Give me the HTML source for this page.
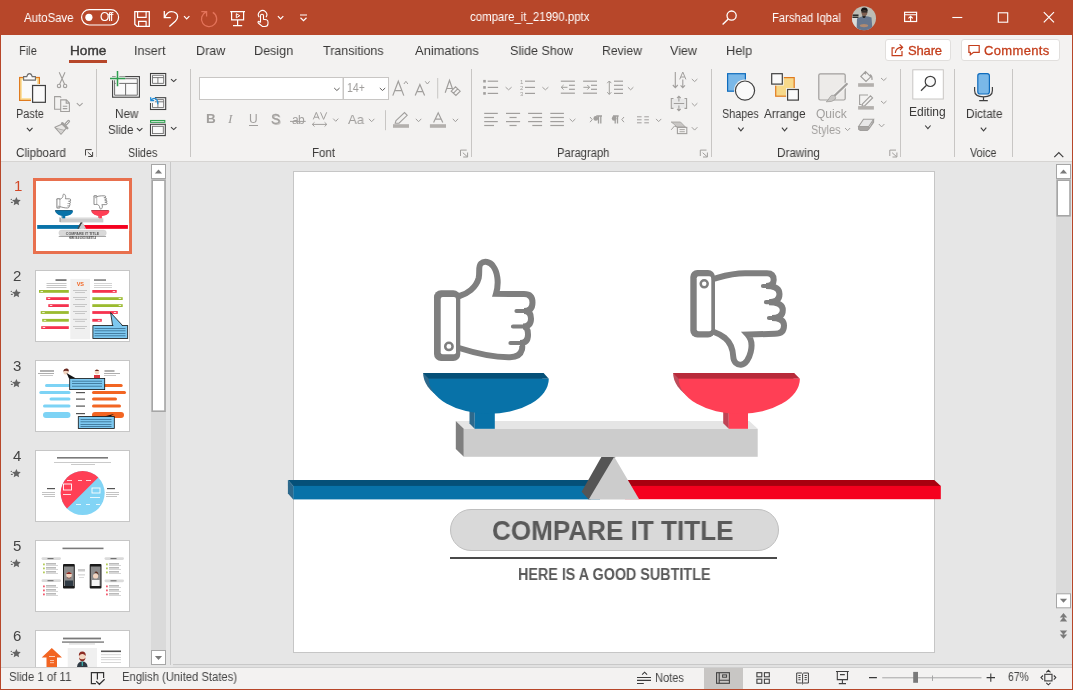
<!DOCTYPE html>
<html><head><meta charset="utf-8"><style>
html,body{margin:0;padding:0;}
body{width:1073px;height:690px;overflow:hidden;position:relative;background:#F3F2F1;font-family:"Liberation Sans",sans-serif;}
.t{position:absolute;white-space:nowrap;will-change:transform;}
svg{overflow:visible}
</style></head><body>
<div style="position:absolute;left:0px;top:0px;width:1073px;height:35px;background:#B7472A"></div>
<div style="position:absolute;left:1px;top:35px;width:1071px;height:126px;background:#F3F2F1"></div>
<div style="position:absolute;left:1px;top:161px;width:1071px;height:1px;background:#D6D4D2"></div>
<div style="position:absolute;left:1px;top:162px;width:1071px;height:505px;background:#E6E6E6"></div>
<div style="position:absolute;left:173px;top:664px;width:899px;height:1px;background:#C8C8C8"></div>
<div style="position:absolute;left:173px;top:665px;width:899px;height:2px;background:#E1E1E1"></div>
<div style="position:absolute;left:1px;top:667px;width:1071px;height:1px;background:#CFCFCF"></div>
<div style="position:absolute;left:1px;top:668px;width:1071px;height:21px;background:#F3F2F1"></div>
<div style="position:absolute;left:0px;top:35px;width:1px;height:655px;background:#B7472A"></div>
<div style="position:absolute;left:1072px;top:35px;width:1px;height:655px;background:#B7472A"></div>
<div style="position:absolute;left:0px;top:689px;width:1073px;height:1px;background:#B7472A"></div>
<span class="t" style="left:24.10px;top:11.54px;font-size:12px;line-height:12px;color:#FFFFFF;letter-spacing:0.000px;transform:scaleX(0.9532);transform-origin:0 0;">AutoSave</span>
<span class="t" style="left:99.60px;top:11.44px;font-size:12px;line-height:12px;color:#FFFFFF;letter-spacing:-1.242px;">Off</span>
<span class="t" style="left:469.80px;top:11.34px;font-size:12px;line-height:12px;color:#FFFFFF;letter-spacing:0.000px;transform:scaleX(0.9521);transform-origin:0 0;">compare_it_21990.pptx</span>
<span class="t" style="left:771.70px;top:12.34px;font-size:12px;line-height:12px;color:#FFFFFF;letter-spacing:0.000px;transform:scaleX(0.9377);transform-origin:0 0;">Farshad Iqbal</span>
<span class="t" style="left:18.50px;top:44.00px;font-size:13px;line-height:13px;color:#3B3A39;letter-spacing:0.000px;transform:scaleX(0.8546);transform-origin:0 0;">File</span>
<span class="t" style="left:69.50px;top:44.00px;font-size:13px;line-height:13px;color:#3B3A39;letter-spacing:0.000px;transform:scaleX(1.0497);transform-origin:0 0;-webkit-text-stroke:0.4px #3B3A39;">Home</span>
<span class="t" style="left:134.40px;top:44.00px;font-size:13px;line-height:13px;color:#3B3A39;letter-spacing:0.000px;transform:scaleX(0.9689);transform-origin:0 0;">Insert</span>
<span class="t" style="left:195.70px;top:44.00px;font-size:13px;line-height:13px;color:#3B3A39;letter-spacing:0.000px;transform:scaleX(0.9626);transform-origin:0 0;">Draw</span>
<span class="t" style="left:253.60px;top:44.00px;font-size:13px;line-height:13px;color:#3B3A39;letter-spacing:0.000px;transform:scaleX(0.9687);transform-origin:0 0;">Design</span>
<span class="t" style="left:323.00px;top:44.00px;font-size:13px;line-height:13px;color:#3B3A39;letter-spacing:0.000px;transform:scaleX(0.9605);transform-origin:0 0;">Transitions</span>
<span class="t" style="left:415.10px;top:44.00px;font-size:13px;line-height:13px;color:#3B3A39;letter-spacing:0.000px;transform:scaleX(0.9921);transform-origin:0 0;">Animations</span>
<span class="t" style="left:510.00px;top:44.00px;font-size:13px;line-height:13px;color:#3B3A39;letter-spacing:0.000px;transform:scaleX(0.9656);transform-origin:0 0;">Slide Show</span>
<span class="t" style="left:602.30px;top:44.00px;font-size:13px;line-height:13px;color:#3B3A39;letter-spacing:0.000px;transform:scaleX(0.9384);transform-origin:0 0;">Review</span>
<span class="t" style="left:670.00px;top:44.00px;font-size:13px;line-height:13px;color:#3B3A39;letter-spacing:0.000px;transform:scaleX(0.9663);transform-origin:0 0;">View</span>
<span class="t" style="left:725.50px;top:44.00px;font-size:13px;line-height:13px;color:#3B3A39;letter-spacing:0.000px;transform:scaleX(0.9800);transform-origin:0 0;">Help</span>
<div style="position:absolute;left:69px;top:60px;width:38px;height:3px;background:#B7472A"></div>
<div style="position:absolute;left:884.5px;top:38.5px;width:66px;height:22px;background:#FFFFFF;border:1px solid #E1DFDD;border-radius:3px;box-sizing:border-box"></div>
<div style="position:absolute;left:960.5px;top:38.5px;width:99px;height:22px;background:#FFFFFF;border:1px solid #E1DFDD;border-radius:3px;box-sizing:border-box"></div>
<span class="t" style="left:907.80px;top:43.80px;font-size:13px;line-height:13px;color:#C43E1C;letter-spacing:-0.147px;-webkit-text-stroke:0.3px #C43E1C;">Share</span>
<svg style="position:absolute;left:0px;top:0px" width="1073" height="690" viewBox="0 0 1073 690"><g fill="none" stroke="#C43E1C" stroke-width="1.2"><path d="M894.6,47.9 H892.1 V55.7 H902 V51"/><path d="M895.3,53 Q895.8,47.5 902.3,47.2 M899.6,44.4 L902.6,47.2 L900,50.2"/><path d="M968.9,45.5 H979.2 V52.3 H973.6 L970.3,54.8 V52.3 H968.9 Z"/></g></svg>
<span class="t" style="left:984.00px;top:43.80px;font-size:13px;line-height:13px;color:#C43E1C;letter-spacing:0.351px;-webkit-text-stroke:0.3px #C43E1C;">Comments</span>
<span class="t" style="left:16.40px;top:107.54px;font-size:12px;line-height:12px;color:#3B3A39;letter-spacing:0.000px;transform:scaleX(0.9060);transform-origin:0 0;">Paste</span>
<span class="t" style="left:114.60px;top:107.54px;font-size:12px;line-height:12px;color:#3B3A39;letter-spacing:0.000px;transform:scaleX(0.9748);transform-origin:0 0;">New</span>
<span class="t" style="left:108.00px;top:123.64px;font-size:12px;line-height:12px;color:#3B3A39;letter-spacing:0.000px;transform:scaleX(0.9519);transform-origin:0 0;">Slide</span>
<span class="t" style="left:15.70px;top:146.84px;font-size:12px;line-height:12px;color:#3B3A39;letter-spacing:0.000px;transform:scaleX(0.9696);transform-origin:0 0;">Clipboard</span>
<span class="t" style="left:128.30px;top:146.84px;font-size:12px;line-height:12px;color:#3B3A39;letter-spacing:0.000px;transform:scaleX(0.8965);transform-origin:0 0;">Slides</span>
<span class="t" style="left:311.60px;top:146.84px;font-size:12px;line-height:12px;color:#3B3A39;letter-spacing:0.000px;transform:scaleX(0.9580);transform-origin:0 0;">Font</span>
<span class="t" style="left:557.40px;top:146.84px;font-size:12px;line-height:12px;color:#3B3A39;letter-spacing:0.000px;transform:scaleX(0.9351);transform-origin:0 0;">Paragraph</span>
<span class="t" style="left:776.70px;top:146.84px;font-size:12px;line-height:12px;color:#3B3A39;letter-spacing:0.000px;transform:scaleX(0.9747);transform-origin:0 0;">Drawing</span>
<span class="t" style="left:970.10px;top:146.84px;font-size:12px;line-height:12px;color:#3B3A39;letter-spacing:0.000px;transform:scaleX(0.8993);transform-origin:0 0;">Voice</span>
<span class="t" style="left:722.10px;top:107.64px;font-size:12px;line-height:12px;color:#3B3A39;letter-spacing:0.000px;transform:scaleX(0.9018);transform-origin:0 0;">Shapes</span>
<span class="t" style="left:764.40px;top:107.64px;font-size:12px;line-height:12px;color:#3B3A39;letter-spacing:0.000px;transform:scaleX(0.9745);transform-origin:0 0;">Arrange</span>
<span class="t" style="left:816.20px;top:108.04px;font-size:12px;line-height:12px;color:#A19F9D;letter-spacing:0.000px;transform:scaleX(1.0041);transform-origin:0 0;">Quick</span>
<span class="t" style="left:811.00px;top:124.04px;font-size:12px;line-height:12px;color:#A19F9D;letter-spacing:0.000px;transform:scaleX(0.9028);transform-origin:0 0;">Styles</span>
<span class="t" style="left:909.30px;top:105.64px;font-size:12px;line-height:12px;color:#3B3A39;letter-spacing:0.000px;transform:scaleX(0.9948);transform-origin:0 0;">Editing</span>
<span class="t" style="left:965.50px;top:107.64px;font-size:12px;line-height:12px;color:#3B3A39;letter-spacing:0.000px;transform:scaleX(0.9773);transform-origin:0 0;">Dictate</span>
<div style="position:absolute;left:96px;top:69px;width:1px;height:88px;background:#C8C6C4"></div>
<div style="position:absolute;left:190px;top:69px;width:1px;height:88px;background:#C8C6C4"></div>
<div style="position:absolute;left:471px;top:69px;width:1px;height:88px;background:#C8C6C4"></div>
<div style="position:absolute;left:711px;top:69px;width:1px;height:88px;background:#C8C6C4"></div>
<div style="position:absolute;left:900px;top:69px;width:1px;height:88px;background:#C8C6C4"></div>
<div style="position:absolute;left:954px;top:69px;width:1px;height:88px;background:#C8C6C4"></div>
<div style="position:absolute;left:1012px;top:69px;width:1px;height:88px;background:#C8C6C4"></div>
<div style="position:absolute;left:151px;top:164px;width:15px;height:501px;background:#DADADA"></div>
<div style="position:absolute;left:170px;top:162px;width:1px;height:502.5px;background:#C8C8C8"></div>
<div style="position:absolute;left:293px;top:171px;width:642px;height:482px;background:#FFFFFF;border:1px solid #C6C6C6;box-sizing:border-box"></div>
<div style="position:absolute;left:1056px;top:164px;width:15px;height:430px;background:#DADADA"></div>
<span class="t" style="left:9.20px;top:671.24px;font-size:12px;line-height:12px;color:#444444;letter-spacing:0.000px;transform:scaleX(0.9465);transform-origin:0 0;">Slide 1 of 11</span>
<span class="t" style="left:122.40px;top:671.44px;font-size:12px;line-height:12px;color:#444444;letter-spacing:0.000px;transform:scaleX(0.9371);transform-origin:0 0;">English (United States)</span>
<span class="t" style="left:654.60px;top:671.64px;font-size:12px;line-height:12px;color:#444444;letter-spacing:0.000px;transform:scaleX(0.9220);transform-origin:0 0;">Notes</span>
<span class="t" style="left:1007.90px;top:671.14px;font-size:12px;line-height:12px;color:#444444;letter-spacing:0.000px;transform:scaleX(0.8661);transform-origin:0 0;">67%</span>
<div style="position:absolute;left:704px;top:668px;width:39px;height:21px;background:#C8C6C4"></div>
<svg style="position:absolute;left:0px;top:0px" width="1073" height="690" viewBox="0 0 1073 690">
<polygon points="287.9,480.1 600,480.1 600,485.9 293.3,485.9" fill="#055078"/>
<polygon points="287.9,480.1 293.3,485.9 293.3,499.4 287.9,493.6" fill="#2D698C"/>
<rect x="293.3" y="485.9" width="306.7" height="13.5" fill="#0872A8"/>
<polygon points="625,480.1 934.3,480.1 940.8,485.9 625,485.9" fill="#A8000F"/>
<rect x="625" y="485.9" width="315.8" height="13.3" fill="#F5001E"/>
<polygon points="601.5,456.8 615.5,456.8 590.5,499.5 588.7,499.5 581.6,491.8" fill="#555555"/>
<polygon points="614.2,456.8 639.3,499.5 588.7,499.5" fill="#CCCCCC"/>
<polygon points="455.8,421 749.3,421 757.7,428.8 463.8,428.8" fill="#E5E5E5"/>
<polygon points="455.8,421 463.8,428.8 463.8,456.8 455.8,449" fill="#7F7F7F"/>
<rect x="463.8" y="428.8" width="293.9" height="28" fill="#CCCCCC"/>
<!-- blue bowl -->
<path d="M423.1,373.1 L543.1,373.1 A60,35 0 0 1 423.1,373.1 Z" fill="#2D698C"/>
<polygon points="469.5,410 474.7,410 474.7,428.8 469.5,423.5" fill="#2D698C"/>
<rect x="474.7" y="405" width="20.1" height="23.8" fill="#0872A8"/>
<polygon points="423.1,373.1 543.6,373.1 548.8,378.8 428.8,378.8" fill="#055078"/>
<path d="M428.8,378.8 L548.8,378.8 A60,35 0 0 1 428.8,378.8 Z" fill="#0872A8"/>
<!-- red bowl -->
<path d="M673.1,373.1 L794.3,373.1 A60.6,35.2 0 0 1 673.1,373.1 Z" fill="#BE4B5A"/>
<polygon points="723.2,410 728.8,410 728.8,428.8 723.2,423.2" fill="#BF4455"/>
<rect x="728.8" y="405" width="19.2" height="23.8" fill="#FF3F55"/>
<polygon points="673.1,373.1 794.1,373.1 799.9,378.7 678.7,378.7" fill="#B82A3A"/>
<path d="M678.7,378.7 L799.9,378.7 A60.6,35.2 0 0 1 678.7,378.7 Z" fill="#FF3F55"/>
<!-- thumbs up -->
<g fill="none" stroke="#7F7F7F" stroke-linejoin="miter" stroke-miterlimit="3" stroke-linecap="round">
<rect x="434" y="290.3" width="26.3" height="70.7" rx="7" fill="#7F7F7F" stroke="none"/><rect x="440.7" y="296.9" width="15.3" height="57.4" rx="2" fill="#FFFFFF" stroke="none"/>
<circle cx="448.9" cy="346.4" r="3.7" stroke-width="2.5"/>
<path stroke-width="6" d="M459.5,296 C467,294 476,288 478.7,278 C480,272 478,266 481,263.5 C484,260.5 490,261.5 493,266 C497,271 499.5,282 496,293.8 L524,294 Q532.5,294 532.5,302.5 Q532.5,311 524,311 Q531,311 531,318.7 Q531,326.5 523,326.5 Q528,326.5 528,334.7 Q528,343 520,343 Q523,343 522,349.5 Q520,357.2 510,357.2 C495,357.5 478,354 459,348"/>
<path stroke-width="4.2" d="M516.5,311 L524,311 M513,326.5 L523,326.5 M510.5,343 L520,343"/>
</g>

<!-- thumbs down -->
<g fill="none" stroke="#7F7F7F" stroke-linejoin="miter" stroke-miterlimit="3" stroke-linecap="round">
<rect x="690.3" y="270" width="24.7" height="67.5" rx="7" fill="#7F7F7F" stroke="none"/><rect x="696.7" y="276.3" width="14.6" height="55" rx="2" fill="#FFFFFF" stroke="none"/>
<circle cx="704.2" cy="283.8" r="3.5" stroke-width="2.5"/>
<path stroke-width="6" d="M714.5,278.5 C722,276.5 732,273.3 745,273.3 L767,273.3 Q773.7,273.3 773.7,280 Q773.7,286 766,286 Q779.5,286 779.5,294 Q779.5,302.2 769,302.2 Q782.8,302.2 782.8,310 Q782.8,318 772,318 Q784,318 784,325.5 Q784,333.8 775,333.8 L747.5,334.6 C751.5,339 752.2,346 750.7,352 C749.2,358.5 745.5,364.4 741,364.7 C737,365 733.5,362 733.3,357 C733,350 731,343 725,338 C721,335 717,333 714,332"/>
<path stroke-width="4.2" d="M763,286 L768,286 M766,302.2 L771,302.2 M769,318 L774,318"/>
</g>

</svg>
<div style="position:absolute;left:450.4px;top:509.1px;width:328.2px;height:41.5px;background:#D9D9D9;border:1px solid #BFBFBF;border-radius:21px;box-sizing:border-box"></div>
<div style="position:absolute;left:449.8px;top:557px;width:326.8px;height:2px;background:#4A4A4A"></div>
<span class="t" style="left:492.20px;top:517.94px;font-size:27px;line-height:27px;color:#595959;letter-spacing:0.000px;font-weight:bold;transform:scaleX(0.9661);transform-origin:0 0;">COMPARE IT TITLE</span>
<span class="t" style="left:517.60px;top:567.06px;font-size:16px;line-height:16px;color:#595959;letter-spacing:0.000px;font-weight:bold;transform:scaleX(0.8956);transform-origin:0 0;">HERE IS A GOOD SUBTITLE</span>
<svg style="position:absolute;left:0px;top:0px" width="1073" height="690" viewBox="0 0 1073 690">
<g fill="none" stroke="#FFFFFF" stroke-width="1.2">
<rect x="81.6" y="9.6" width="37" height="15.4" rx="7.7"/>
<path d="M134.8,11.7 H149.3 V26.4 H137 L134.8,24.2 Z" stroke-width="1.3"/>
<path d="M137.6,11.7 V17.4 H146.1 V11.7" stroke-width="1.2"/>
<path d="M138.6,26.4 V21.4 H146.1 V26.4" stroke-width="1.2"/>
<path d="M164.3,11 V17.6 H170.8" stroke-width="1.3"/>
<path d="M164.8,17.2 C166.5,13.5 169,11.6 171.5,11.6 C175,11.6 177.6,13.8 177.6,16.5 C177.6,18.5 176.8,19.8 175.3,21.3 L169.4,26.6" stroke-width="1.3"/>
<path d="M184,16.2 L186.7,18.9 L189.4,16.2"/>
<path d="M212.8,12.4 A7.6,7.6 0 1 1 206.4,11.9 M201.3,11.6 H206.6 V16.4" stroke="#E3735A" stroke-width="1.3"/>
<path d="M230.2,11.6 H245 M231.6,11.6 V19.8 H243.6 V11.6 M237.6,19.8 V25.5 M233,25.6 H242.2" stroke-width="1.2"/>
<path d="M236.3,13.7 V17.8 L239.8,15.75 Z" stroke-width="1"/>
<path d="M259.2,17.3 A4.2,4.2 0 1 1 266,17.3" stroke-width="1.1"/>
<path d="M260.5,22.5 V15.8 Q260.5,14.2 262,14.2 Q263.5,14.2 263.5,15.8 V19.2 L266.5,19.8 Q268,20.2 268,22 V23.5 Q268,26.5 265,26.5 H262.5 L258.5,23.3 Q257.3,22 258.8,21.3 L260.5,22.5" stroke-width="1.1"/>
<path d="M277.9,16.2 L280.6,18.9 L283.3,16.2"/>
<path d="M300,15 H307 M300.5,17.8 L303.5,20.6 L306.5,17.8"/>
<circle cx="731.6" cy="15.6" r="4.6" stroke-width="1.3"/>
<path d="M728.3,19 L722.6,24.6" stroke-width="1.4"/>
<rect x="904.6" y="12.3" width="12" height="9.2" stroke-width="1.2"/>
<path d="M904.6,14.8 H916.6 M910.6,21.5 V16.2 M908.4,18.4 L910.6,16.2 L912.8,18.4" stroke-width="1.1"/>
<path d="M952.3,17.5 H962.3" stroke-width="1.1"/>
<rect x="998.3" y="12.8" width="9.4" height="9.4" stroke-width="1.1"/>
<path d="M1043.8,12.2 L1054,22.4 M1054,12.2 L1043.8,22.4" stroke-width="1.2"/>
</g>
<circle cx="88.9" cy="17.3" r="3.6" fill="#FFFFFF"/>
<defs><clipPath id="av"><circle cx="864" cy="18.2" r="12"/></clipPath></defs>
<g clip-path="url(#av)">
<rect x="850" y="5" width="28" height="28" fill="#BDBCB4"/>
<rect x="851" y="18" width="7" height="13" fill="#DCDCDA"/>
<rect x="852.5" y="14.5" width="6" height="1.4" fill="#1A1A1A"/><rect x="852.5" y="16.6" width="6" height="1.3" fill="#222"/>
<path d="M856.5,31 L857,18.5 Q864,14.5 871.5,17.5 L872.5,31 Z" fill="#66768E"/>
<path d="M862,15.5 L866,15.5 L865,18 L863,18 Z" fill="#2A2A2A"/>
<ellipse cx="864.4" cy="12.6" rx="2.9" ry="3.4" fill="#7D5F50"/>
<path d="M861,11.5 Q860.8,7.3 864.3,7.4 Q868,7.3 867.7,11.3 Q864.5,9.6 861,11.5 Z" fill="#151515"/>
<rect x="861.6" y="11.2" width="5.8" height="1.3" fill="#222"/>
<ellipse cx="864" cy="25.6" rx="4.2" ry="1.7" fill="#B08A70"/>
</g>
</svg>
<svg style="position:absolute;left:0px;top:0px" width="1073" height="690" viewBox="0 0 1073 690"><rect x="19.6" y="77.5" width="19.8" height="22.9" fill="#FBDB8F" stroke="#E07B1F" stroke-width="1.2"/><rect x="21.8" y="79.7" width="15.4" height="18.5" fill="#FAFAFA"/><path d="M23.6,80.1 V76.6 H26.8 Q27.5,73.6 29.5,73.6 Q31.5,73.6 32.2,76.6 H35.4 V80.1 Z" fill="#FAFAFA" stroke="#6E6E6E" stroke-width="1.1"/><rect x="31" y="84" width="16" height="19.8" fill="#F3F2F1"/><rect x="32.6" y="85.5" width="12.8" height="16.8" fill="#FAFAFA" stroke="#404040" stroke-width="1.2"/><path d="M26.9,127.8 L29.7,130.9 L32.5,127.8" fill="none" stroke="#404040" stroke-width="1.1"/><path d="M59.2,72.3 L64.6,84.3 M65,72.3 L59.6,84.3" fill="none" stroke="#A19F9D" stroke-width="1.1"/><circle cx="59" cy="85.9" r="1.7" fill="none" stroke="#A19F9D" stroke-width="1.1"/><circle cx="65.1" cy="85.9" r="1.7" fill="none" stroke="#A19F9D" stroke-width="1.1"/><path d="M61,109.3 H54.6 V96.6 H60.2 L61.2,97.6" fill="none" stroke="#A19F9D" stroke-width="1.1"/><path d="M60.7,99.9 H66.4 L69.4,102.9 V111.5 H60.7 Z M66.2,99.9 V103.1 H69.4 M62.8,106.2 H67.3 M62.8,108.6 H67.3" fill="none" stroke="#A19F9D" stroke-width="1.1"/><path d="M76.8,103.2 L79.69999999999999,105.8 L82.6,103.2" fill="none" stroke="#A19F9D" stroke-width="1.1"/><path d="M68.6,121.3 L65.8,124.3" stroke="#A19F9D" stroke-width="3" stroke-linecap="round"/><path d="M68.6,121.3 L65.8,124.3" stroke="#F3F2F1" stroke-width="0.9"/><path d="M62.3,123.9 L54.9,127.3 L61,134.2 L66.5,127.8 Z" fill="#E8E6E4" stroke="#A19F9D" stroke-width="1.1" stroke-linejoin="round"/><path d="M55.8,128.3 L64.6,130.4 M57.5,130.2 L61,134.2 L64.6,130.4" fill="#D2D0CE" stroke="#A19F9D" stroke-width="0.8"/><path d="M62.2,123.3 L67.2,128.1" stroke="#A19F9D" stroke-width="2.6" stroke-linecap="round"/><path d="M85.5,155.5 V149.6 H91.7 M87.8,152.2 L92.3,156.2 M92.6,152 V156.5 H88.2" fill="none" stroke="#484644" stroke-width="1"/><rect x="112.6" y="76.6" width="26.8" height="20.6" fill="#FAFAFA" stroke="#404040" stroke-width="1.1"/><path d="M114.6,78.7 H137.3 V95.2 H114.6 Z M114.6,83.4 H137.3 M125.6,83.4 V95.2" fill="none" stroke="#6E6E6E" stroke-width="1"/><path d="M110,78.4 H125.3 M117.5,71.1 V86.3" fill="none" stroke="#F3F2F1" stroke-width="3.6"/><path d="M110,78.4 H125.3 M117.5,71.1 V86.3" fill="none" stroke="#2E9E4F" stroke-width="1.5"/><path d="M136.9,128.2 L139.65,130.7 L142.4,128.2" fill="none" stroke="#404040" stroke-width="1.1"/><rect x="150.5" y="73.5" width="15.2" height="12" fill="#FAFAFA" stroke="#404040" stroke-width="1.1"/><path d="M152.5,75.3 H163.7 V83.4 H152.5 Z M152.5,77.6 H163.7 M157.9,77.6 V83.4" fill="none" stroke="#6E6E6E" stroke-width="0.9"/><path d="M171,79.1 L173.7,81.6 L176.4,79.1" fill="none" stroke="#404040" stroke-width="1.1"/><rect x="150.5" y="97.7" width="15.2" height="11.8" fill="#FAFAFA" stroke="#404040" stroke-width="1.1"/><path d="M152.5,99.6 H163.7 V107.6 H152.5 Z M152.5,101.8 H163.7 M157.9,101.8 V107.6" fill="none" stroke="#6E6E6E" stroke-width="0.9"/><path d="M149,97 H155 V103 H149 Z" fill="#F3F2F1"/><path d="M151,100.3 Q153.5,97.3 156.2,99 Q158,100.5 157.8,104.3 M150.6,97.2 L150.9,100.6 L154.2,100.6" fill="none" stroke="#1E8BD6" stroke-width="1.3"/><rect x="150.6" y="120.5" width="14.2" height="1.8" fill="#FFFFFF" stroke="#2E9E4F" stroke-width="1.1"/><rect x="150.5" y="124.3" width="14.8" height="11.3" fill="#FAFAFA" stroke="#404040" stroke-width="1.1"/><rect x="152.5" y="126.3" width="10.8" height="7.3" fill="none" stroke="#6E6E6E" stroke-width="0.9"/><path d="M171,127.1 L173.7,129.6 L176.4,127.1" fill="none" stroke="#404040" stroke-width="1.1"/><rect x="199.5" y="77.5" width="143.5" height="22" fill="#FFFFFF" stroke="#C8C6C4" stroke-width="1"/><rect x="343.5" y="77.5" width="45" height="22" fill="#FFFFFF" stroke="#C8C6C4" stroke-width="1"/><path d="M334.2,88 L336.9,90.5 L339.6,88" fill="none" stroke="#605E5C" stroke-width="1"/><path d="M379.8,88 L382.5,90.5 L385.2,88" fill="none" stroke="#605E5C" stroke-width="1"/><path d="M392.8,95.6 L398.3,81.2 L403.8,95.6 M394.8,90.6 H401.8" fill="none" stroke="#A19F9D" stroke-width="1.2"/><path d="M403.9,84 L405.9,81.3 L407.9,84" fill="none" stroke="#A19F9D" stroke-width="1"/><path d="M415.2,95.6 L419.9,84.5 L424.6,95.6 M416.9,91.6 H422.9" fill="none" stroke="#A19F9D" stroke-width="1.2"/><path d="M425.2,81.3 L427.4,84 L429.6,81.3" fill="none" stroke="#A19F9D" stroke-width="1"/><rect x="437.2" y="78" width="1" height="20.5" fill="#C8C6C4"/><path d="M445.2,92.8 L449.5,80.3 L453.8,92.8 M446.8,88.5 H452.2" fill="none" stroke="#A19F9D" stroke-width="1.2"/><path d="M451.2,91.2 L455.5,86.8 L460.2,91.2 L455.9,95.5 Z M453.3,93.3 L457.7,88.9" fill="#F3F2F1" stroke="#A19F9D" stroke-width="1.1"/><path d="M333.2,118.6 L335.75,121.3 L338.3,118.6" fill="none" stroke="#A19F9D" stroke-width="1"/><path d="M368.9,118.8 L371.65,121.7 L374.4,118.8" fill="none" stroke="#A19F9D" stroke-width="1"/><rect x="385" y="110.2" width="1" height="20" fill="#C8C6C4"/><path d="M396,120.6 L404.5,112.6 L407.2,115.3 L399,123.2 L395.2,123.2 Z" fill="none" stroke="#A19F9D" stroke-width="1.1"/><rect x="393" y="124.2" width="16" height="3.6" fill="#B3B0AD"/><path d="M415.8,118.8 L418.55,121.7 L421.3,118.8" fill="none" stroke="#A19F9D" stroke-width="1"/><path d="M433.6,122.6 L438.2,112.8 L442.8,122.6 M435.2,119.2 H441.2" fill="none" stroke="#A19F9D" stroke-width="1.2"/><rect x="429.9" y="124.2" width="16.1" height="3.6" fill="#B3B0AD"/><path d="M452.8,118.8 L455.45000000000005,121.7 L458.1,118.8" fill="none" stroke="#A19F9D" stroke-width="1"/><path d="M290,121.4 H305.7" stroke="#A19F9D" stroke-width="1"/><path d="M312.3,124.4 H326.8 M314.5,122.3 L312.3,124.4 L314.5,126.5 M324.6,122.3 L326.8,124.4 L324.6,126.5" fill="none" stroke="#A19F9D" stroke-width="1"/><path d="M313.3,119.4 L316.3,112.3 L319.3,119.4 M314.3,117.2 H318.3 M320.5,112.3 L323.6,119.4 L326.7,112.3" fill="none" stroke="#A19F9D" stroke-width="1"/><rect x="483.2" y="79.9" width="2.6" height="2.6" fill="#A19F9D"/><rect x="483.2" y="86.10000000000001" width="2.6" height="2.6" fill="#A19F9D"/><rect x="483.2" y="92.10000000000001" width="2.6" height="2.6" fill="#A19F9D"/><path d="M487.7,81.2 H498.1" stroke="#A19F9D" stroke-width="1.2"/><path d="M487.7,87.4 H498.1" stroke="#A19F9D" stroke-width="1.2"/><path d="M487.7,93.4 H498.1" stroke="#A19F9D" stroke-width="1.2"/><path d="M505.6,87.2 L508.6,89.8 L511.6,87.2" fill="none" stroke="#A19F9D" stroke-width="1"/><path d="M525,81.2 H535" stroke="#A19F9D" stroke-width="1.2"/><path d="M525,87.4 H535" stroke="#A19F9D" stroke-width="1.2"/><path d="M525,93.4 H535" stroke="#A19F9D" stroke-width="1.2"/><path d="M542.4,87.2 L545.4,89.8 L548.4,87.2" fill="none" stroke="#A19F9D" stroke-width="1"/><path d="M560.8,81.2 H574.9" stroke="#A19F9D" stroke-width="1.2"/><path d="M560.8,93.2 H574.9" stroke="#A19F9D" stroke-width="1.2"/><path d="M569,85.3 H574.9" stroke="#A19F9D" stroke-width="1.2"/><path d="M569,89.3 H574.9" stroke="#A19F9D" stroke-width="1.2"/><path d="M561.2,87.3 H567.5 M563.6,85 L561.2,87.3 L563.6,89.6" fill="none" stroke="#A19F9D" stroke-width="1"/><path d="M583.1,81.2 H597" stroke="#A19F9D" stroke-width="1.2"/><path d="M583.1,93.2 H597" stroke="#A19F9D" stroke-width="1.2"/><path d="M591,85.3 H597" stroke="#A19F9D" stroke-width="1.2"/><path d="M591,89.3 H597" stroke="#A19F9D" stroke-width="1.2"/><path d="M583.4,87.3 H589.6 M587.3,85 L589.6,87.3 L587.3,89.6" fill="none" stroke="#A19F9D" stroke-width="1"/><path d="M609.3,81 V94.4 M607.2,83.2 L609.3,81 L611.4,83.2 M607.2,92.2 L609.3,94.4 L611.4,92.2" fill="none" stroke="#A19F9D" stroke-width="1"/><path d="M614,81.2 H623" stroke="#A19F9D" stroke-width="1.2"/><path d="M614,85.3 H623" stroke="#A19F9D" stroke-width="1.2"/><path d="M614,89.3 H623" stroke="#A19F9D" stroke-width="1.2"/><path d="M614,93.4 H623" stroke="#A19F9D" stroke-width="1.2"/><path d="M627.9,87.2 L630.65,89.8 L633.4,87.2" fill="none" stroke="#A19F9D" stroke-width="1"/><path d="M484.2,113.4 H497.8" stroke="#A19F9D" stroke-width="1.2"/><path d="M484.2,121.6 H497.8" stroke="#A19F9D" stroke-width="1.2"/><path d="M484.2,117.5 H494" stroke="#A19F9D" stroke-width="1.2"/><path d="M484.2,125.5 H494" stroke="#A19F9D" stroke-width="1.2"/><path d="M506,113.4 H520.1" stroke="#A19F9D" stroke-width="1.2"/><path d="M506,121.6 H520.1" stroke="#A19F9D" stroke-width="1.2"/><path d="M509.5,117.5 H516.6" stroke="#A19F9D" stroke-width="1.2"/><path d="M509.5,125.5 H516.6" stroke="#A19F9D" stroke-width="1.2"/><path d="M528.1,113.4 H542.1" stroke="#A19F9D" stroke-width="1.2"/><path d="M528.1,121.6 H542.1" stroke="#A19F9D" stroke-width="1.2"/><path d="M532.3,117.5 H542.1" stroke="#A19F9D" stroke-width="1.2"/><path d="M532.3,125.5 H542.1" stroke="#A19F9D" stroke-width="1.2"/><path d="M550.3,113.4 H563.9" stroke="#A19F9D" stroke-width="1.2"/><path d="M550.3,117.5 H563.9" stroke="#A19F9D" stroke-width="1.2"/><path d="M550.3,121.6 H563.9" stroke="#A19F9D" stroke-width="1.2"/><path d="M550.3,125.5 H563.9" stroke="#A19F9D" stroke-width="1.2"/><path d="M569.7,118.9 L572.55,121.6 L575.4,118.9" fill="none" stroke="#A19F9D" stroke-width="1"/><path d="M590,117 L592.2,119.6 L590,122.2" fill="none" stroke="#A19F9D" stroke-width="1"/><path d="M596.3,116 H602 M598.5,116 V123.6 M600.8,116 V123.6" fill="none" stroke="#A19F9D" stroke-width="1.3"/><circle cx="595.8" cy="118.4" r="2.4" fill="#A19F9D"/><path d="M613,116 H618.7 M615.2,116 V123.6 M617.5,116 V123.6" fill="none" stroke="#A19F9D" stroke-width="1.3"/><circle cx="614.2" cy="118.4" r="2.4" fill="#A19F9D"/><path d="M624,117 L621.8,119.6 L624,122.2" fill="none" stroke="#A19F9D" stroke-width="1"/><path d="M637,116.8 H641.6" stroke="#A19F9D" stroke-width="1"/><path d="M637,119.8 H641.6" stroke="#A19F9D" stroke-width="1"/><path d="M637,122.8 H641.6" stroke="#A19F9D" stroke-width="1"/><path d="M644.3,116.8 H648.9" stroke="#A19F9D" stroke-width="1"/><path d="M644.3,119.8 H648.9" stroke="#A19F9D" stroke-width="1"/><path d="M644.3,122.8 H648.9" stroke="#A19F9D" stroke-width="1"/><path d="M656,118.9 L658.65,121.6 L661.3,118.9" fill="none" stroke="#A19F9D" stroke-width="1"/><path d="M675.3,72 V87.6 M672.8,85 L675.3,87.6 L677.8,85 M682.8,79.6 V87.6 M680.6,85.3 L682.8,87.6 L685,85.3" fill="none" stroke="#A19F9D" stroke-width="1.1"/><path d="M679.7,79.4 L682.8,72 L685.9,79.4 M680.8,77 H684.8" fill="none" stroke="#A19F9D" stroke-width="1"/><path d="M691.8,79 L694.5999999999999,81.6 L697.4,79" fill="none" stroke="#A19F9D" stroke-width="1"/><rect x="672" y="98.8" width="14" height="9.4" fill="#E8E8E8"/><path d="M673.5,98.5 H671.3 V108.4 H673.5 M684.5,98.5 H686.6 V108.4 H684.5 M673.8,103.5 H684.2 M678.9,96.3 V101.6 M677,98.2 L678.9,96.3 L680.8,98.2 M678.9,105.4 V110.8 M677,108.9 L678.9,110.8 L680.8,108.9" fill="none" stroke="#A19F9D" stroke-width="1.1"/><path d="M691.8,103.2 L694.5999999999999,105.9 L697.4,103.2" fill="none" stroke="#A19F9D" stroke-width="1"/><path d="M671.2,122 H680.5 L685.4,127 H677 L674.5,124.5 Z" fill="#C8C6C4" stroke="#A19F9D" stroke-width="0.8"/><path d="M671.2,129.8 L674.5,126 L677,127" fill="none" stroke="#A19F9D" stroke-width="1"/><rect x="677.4" y="127.4" width="9.4" height="6.2" fill="#F3F2F1" stroke="#A19F9D" stroke-width="1.1"/><path d="M679.5,129.6 H684.8" stroke="#A19F9D" stroke-width="0.9"/><path d="M679.5,131.7 H684.8" stroke="#A19F9D" stroke-width="0.9"/><path d="M691.8,127.2 L694.5999999999999,130.1 L697.4,127.2" fill="none" stroke="#A19F9D" stroke-width="1"/><path d="M460.5,156.0 V150.1 H466.7 M462.8,152.7 L467.3,156.7 M467.6,152.5 V157.0 H463.2" fill="none" stroke="#A19F9D" stroke-width="1"/><path d="M700.3,156.0 V150.1 H706.5 M702.5999999999999,152.7 L707.0999999999999,156.7 M707.4,152.5 V157.0 H703.0" fill="none" stroke="#A19F9D" stroke-width="1"/><path d="M889.8,156.0 V150.1 H896.0 M892.0999999999999,152.7 L896.5999999999999,156.7 M896.9,152.5 V157.0 H892.5" fill="none" stroke="#A19F9D" stroke-width="1"/><rect x="727.6" y="73.7" width="17.8" height="17.5" fill="#7AB8E8" stroke="#0F6CBD" stroke-width="1.2"/><circle cx="745" cy="90.6" r="11" fill="#F3F2F1"/><circle cx="745" cy="90.6" r="9.6" fill="#FAFAFA" stroke="#404040" stroke-width="1.2"/><path d="M738.2,127.6 L740.9000000000001,130.8 L743.6,127.6" fill="none" stroke="#404040" stroke-width="1.1"/><rect x="775.7" y="77.6" width="18.5" height="18.6" fill="#F7D98A" stroke="#E07B1F" stroke-width="1.2"/><rect x="770.2" y="72.2" width="13.6" height="13.4" fill="#F3F2F1"/><rect x="771.7" y="73.7" width="10.6" height="10.4" fill="#FAFAFA" stroke="#404040" stroke-width="1.2"/><rect x="786.1" y="88" width="13.8" height="13.6" fill="#F3F2F1"/><rect x="787.6" y="89.5" width="10.8" height="10.6" fill="#FAFAFA" stroke="#404040" stroke-width="1.2"/><path d="M781.9,127.6 L784.5999999999999,130.8 L787.3,127.6" fill="none" stroke="#404040" stroke-width="1.1"/><rect x="818.8" y="73.8" width="26.4" height="26.2" rx="1.5" fill="#EDEBE9" stroke="#A19F9D" stroke-width="1.2"/><path d="M846.8,84 L833.5,96.8" stroke="#F3F2F1" stroke-width="4.5"/><path d="M846.8,84 L833.5,96.8" stroke="#A19F9D" stroke-width="2.2" stroke-linecap="round"/><path d="M834.3,95.2 Q831,94.5 829.5,97.5 Q828.5,100.3 826.2,101.8 Q832.5,102.3 835.2,99.3 Q836.5,97.5 834.3,95.2 Z" fill="#C8C6C4" stroke="#A19F9D" stroke-width="0.8"/><path d="M845,128 L847.6,130.6 L850.2,128" fill="none" stroke="#A19F9D" stroke-width="1"/><path d="M860.8,76.5 L865.5,71.5 L870.8,76.8 L866,81.5 Z M865.5,71.5 V74.5 M870.2,74.5 Q872.5,76.5 872,80" fill="none" stroke="#A19F9D" stroke-width="1.1"/><rect x="858.1" y="83.2" width="15.8" height="3.6" fill="#B3B0AD"/><path d="M881,78 L883.75,80.5 L886.5,78" fill="none" stroke="#A19F9D" stroke-width="1"/><path d="M868,95 H859.6 V104.5 H861.5 M862.5,103.8 L870.5,95.8 L872.6,97.9 L864.6,105.9 L862,106.3 Z" fill="none" stroke="#A19F9D" stroke-width="1.1"/><rect x="858.1" y="106.1" width="15.8" height="3.5" fill="#B3B0AD"/><path d="M881,101 L883.75,103.5 L886.5,101" fill="none" stroke="#A19F9D" stroke-width="1"/><path d="M858.6,126.5 L863.5,119.3 H873.6 L868.7,126.5 Z" fill="#E8E8E8" stroke="#A19F9D" stroke-width="1.1"/><path d="M858.6,126.5 V129.3 L860.2,130.5 H867.2 L868.7,129.3 V126.5 Z M868.7,129.3 L873.6,122.3 V119.3" fill="#A8A6A4" stroke="#A19F9D" stroke-width="1.1"/><path d="M878.8,124 L881.5999999999999,126.9 L884.4,124" fill="none" stroke="#A19F9D" stroke-width="1"/><rect x="912.8" y="69.8" width="30.5" height="29.2" fill="#FFFFFF" stroke="#C8C6C4" stroke-width="1"/><circle cx="930.3" cy="81.4" r="5.1" fill="#FAFAFA" stroke="#404040" stroke-width="1.2"/><path d="M926.5,85.3 L921,90.8" stroke="#404040" stroke-width="1.3"/><path d="M925.2,125.5 L927.9000000000001,128.6 L930.6,125.5" fill="none" stroke="#404040" stroke-width="1.1"/><rect x="977.8" y="73.6" width="11.6" height="20.4" rx="2.2" fill="#7AB8E8" stroke="#0F6CBD" stroke-width="1.2"/><path d="M974.6,87 V90.5 Q974.6,96.8 983.5,96.8 Q992.4,96.8 992.4,90.5 V87 M983.5,96.8 V100.3 M979.2,100.6 H987.8" fill="none" stroke="#404040" stroke-width="1.2"/><path d="M980.8,127.6 L983.55,130.8 L986.3,127.6" fill="none" stroke="#404040" stroke-width="1.1"/><path d="M1054.3,157.2 L1058.8,152.6 L1063.3,157.2" fill="none" stroke="#404040" stroke-width="1.2"/></svg>
<span class="t" style="left:206.30px;top:112.27px;font-size:13.5px;line-height:13.5px;color:#A19F9D;letter-spacing:0.000px;font-weight:bold;">B</span>
<span class="t" style="left:228.20px;top:112.27px;font-size:13.5px;line-height:13.5px;color:#A19F9D;letter-spacing:0.000px;font-family:'Liberation Serif',serif;font-style:italic;">I</span>
<span class="t" style="left:249.00px;top:112.94px;font-size:12px;line-height:12px;color:#A19F9D;letter-spacing:0.000px;">U</span>
<div style="position:absolute;left:249px;top:124.8px;width:8.8px;height:1.1px;background:#A19F9D"></div>
<span class="t" style="left:272.20px;top:112.75px;font-size:14px;line-height:14px;color:#C8C6C4;letter-spacing:0.000px;">S</span>
<span class="t" style="left:271.20px;top:111.95px;font-size:14px;line-height:14px;color:#A19F9D;letter-spacing:0.000px;-webkit-text-stroke:0.3px #A19F9D;">S</span>
<span class="t" style="left:291.80px;top:114.04px;font-size:12px;line-height:12px;color:#A19F9D;letter-spacing:-0.746px;">ab</span>
<span class="t" style="left:348.00px;top:113.37px;font-size:13.5px;line-height:13.5px;color:#A19F9D;letter-spacing:0.000px;transform:scaleX(0.9690);transform-origin:0 0;">Aa</span>
<span class="t" style="left:346.70px;top:81.47px;font-size:13.5px;line-height:13.5px;color:#A19F9D;letter-spacing:0.000px;transform:scaleX(0.7817);transform-origin:0 0;">14+</span>
<span class="t" style="left:520.20px;top:78.52px;font-size:6px;line-height:6px;color:#A19F9D;letter-spacing:0.000px;">1</span>
<span class="t" style="left:520.20px;top:84.52px;font-size:6px;line-height:6px;color:#A19F9D;letter-spacing:0.000px;">2</span>
<span class="t" style="left:520.20px;top:90.52px;font-size:6px;line-height:6px;color:#A19F9D;letter-spacing:0.000px;">3</span>
<svg style="position:absolute;left:0px;top:0px" width="1073" height="690" viewBox="0 0 1073 690"><rect x="151.5" y="164.5" width="14" height="14" fill="#FFFFFF" stroke="#A6A6A6" stroke-width="1"/><path d="M154.9,173.6 L158.5,169.6 L162.1,173.6 Z" fill="#7A7A7A"/><rect x="152.2" y="180.2" width="12.8" height="231" fill="#FFFFFF" stroke="#A6A6A6" stroke-width="1.6"/><rect x="151.5" y="650.5" width="14" height="14" fill="#FFFFFF" stroke="#A6A6A6" stroke-width="1"/><path d="M154.9,655.9 L158.5,659.9 L162.1,655.9 Z" fill="#7A7A7A"/><rect x="1056.5" y="164.5" width="14" height="14" fill="#FFFFFF" stroke="#A6A6A6" stroke-width="1"/><path d="M1059.9,173.6 L1063.5,169.6 L1067.1,173.6 Z" fill="#7A7A7A"/><rect x="1057.2" y="180.2" width="12.8" height="35.6" fill="#FFFFFF" stroke="#A6A6A6" stroke-width="1.6"/><rect x="1056.5" y="593.8" width="14" height="14" fill="#FFFFFF" stroke="#A6A6A6" stroke-width="1"/><path d="M1059.9,598.8 L1063.5,602.8 L1067.1,598.8 Z" fill="#7A7A7A"/><path d="M1059.8,617.4 L1063.5,613 L1067.2,617.4 Z M1059.8,621.4 L1063.5,617 L1067.2,621.4 Z" fill="#7A7A7A"/><path d="M1059.8,630.4 L1063.5,634.8 L1067.2,630.4 Z M1059.8,634.4 L1063.5,638.8 L1067.2,634.4 Z" fill="#7A7A7A"/><path d="M95.9,683.7 H91.4 V672.6 H103.6 V678 M97.4,672.6 V679.6 M96.2,681.2 L99.4,684.3 L104.6,679.2" fill="none" stroke="#333333" stroke-width="1.2"/><path d="M642.1,674.6 L644.6,672.2 L647.1,674.6 M637,677.5 H651 M637,680.4 H651 M637,683.5 H643.8" fill="none" stroke="#3A3A3A" stroke-width="1.1"/><rect x="716.6" y="672.7" width="12.8" height="10.6" fill="none" stroke="#404040" stroke-width="1.1"/><path d="M719.2,672.7 V683.3 M719.2,680.2 H729.4" fill="none" stroke="#404040" stroke-width="1.1"/><rect x="722.6" y="674.9" width="4" height="2.3" fill="none" stroke="#404040" stroke-width="1"/><rect x="756.9" y="672.7" width="4.9" height="4.1" fill="none" stroke="#404040" stroke-width="1.1"/><rect x="764.4" y="672.7" width="4.9" height="4.1" fill="none" stroke="#404040" stroke-width="1.1"/><rect x="756.9" y="679.2" width="4.9" height="4.1" fill="none" stroke="#404040" stroke-width="1.1"/><rect x="764.4" y="679.2" width="4.9" height="4.1" fill="none" stroke="#404040" stroke-width="1.1"/><path d="M796.7,673 H801.5 L802.6,674 L803.7,673 H808.4 V683 H803.7 L802.6,684 L801.5,683 H796.7 Z M802.6,674 V683.5 M798.4,675.5 H800.6 M798.4,677.6 H800.6 M798.4,679.7 H800.6 M804.6,675.5 H806.8 M804.6,677.6 H806.8 M804.6,679.7 H806.8" fill="none" stroke="#404040" stroke-width="1"/><path d="M836,671.5 H848.8 M837.3,671.5 V679.6 H847.5 V671.5 M842.4,679.6 V683.5 M838.8,683.6 H846 M840,674.6 H844.8" fill="none" stroke="#404040" stroke-width="1.1"/><path d="M869,677.6 H876.9 M986.6,677.6 H995 M990.8,673.5 V681.8" fill="none" stroke="#3A3A3A" stroke-width="1.1"/><rect x="882.2" y="677.3" width="99.3" height="1" fill="#A6A6A6"/><rect x="932" y="675.5" width="1" height="5.4" fill="#A6A6A6"/><rect x="913.2" y="671.9" width="4.8" height="10.9" fill="#7A7A7A"/><rect x="1044.8" y="674.3" width="7.2" height="6.6" fill="none" stroke="#3A3A3A" stroke-width="1.1"/><path d="M1046.3,672.3 L1048.4,670.3 L1050.5,672.3 M1046.3,682.8 L1048.4,684.8 L1050.5,682.8 M1043,675.5 L1041,677.6 L1043,679.7 M1053.8,675.5 L1055.8,677.6 L1053.8,679.7" fill="none" stroke="#3A3A3A" stroke-width="1.1"/></svg>
<div style="position:absolute;left:0;top:162px;width:151px;height:505px;overflow:hidden;will-change:transform">
<svg style="position:absolute;left:0;top:-162px" width="151" height="690"><rect x="34.5" y="179.5" width="96" height="73" fill="#FFFFFF" stroke="#E8704E" stroke-width="3"/><rect x="35.5" y="270.5" width="94" height="71" fill="#FFFFFF" stroke="#C6C6C6" stroke-width="1"/><rect x="35.5" y="360.5" width="94" height="71" fill="#FFFFFF" stroke="#C6C6C6" stroke-width="1"/><rect x="35.5" y="450.5" width="94" height="71" fill="#FFFFFF" stroke="#C6C6C6" stroke-width="1"/><rect x="35.5" y="540.5" width="94" height="71" fill="#FFFFFF" stroke="#C6C6C6" stroke-width="1"/><rect x="35.5" y="630.5" width="94" height="71" fill="#FFFFFF" stroke="#C6C6C6" stroke-width="1"/><polygon points="16.40,196.90 17.69,199.72 20.77,200.08 18.49,202.18 19.10,205.22 16.40,203.70 13.70,205.22 14.31,202.18 12.03,200.08 15.11,199.72" fill="#636363"/><circle cx="11.299999999999999" cy="199.4" r="0.65" fill="#636363"/><path d="M10.899999999999999,202.4 H12.799999999999999" stroke="#636363" stroke-width="1.1"/><polygon points="16.40,288.90 17.69,291.72 20.77,292.08 18.49,294.18 19.10,297.22 16.40,295.70 13.70,297.22 14.31,294.18 12.03,292.08 15.11,291.72" fill="#636363"/><circle cx="11.299999999999999" cy="291.4" r="0.65" fill="#636363"/><path d="M10.899999999999999,294.4 H12.799999999999999" stroke="#636363" stroke-width="1.1"/><polygon points="16.40,378.90 17.69,381.72 20.77,382.08 18.49,384.18 19.10,387.22 16.40,385.70 13.70,387.22 14.31,384.18 12.03,382.08 15.11,381.72" fill="#636363"/><circle cx="11.299999999999999" cy="381.4" r="0.65" fill="#636363"/><path d="M10.899999999999999,384.4 H12.799999999999999" stroke="#636363" stroke-width="1.1"/><polygon points="16.40,468.90 17.69,471.72 20.77,472.08 18.49,474.18 19.10,477.22 16.40,475.70 13.70,477.22 14.31,474.18 12.03,472.08 15.11,471.72" fill="#636363"/><circle cx="11.299999999999999" cy="471.4" r="0.65" fill="#636363"/><path d="M10.899999999999999,474.4 H12.799999999999999" stroke="#636363" stroke-width="1.1"/><polygon points="16.40,558.90 17.69,561.72 20.77,562.08 18.49,564.18 19.10,567.22 16.40,565.70 13.70,567.22 14.31,564.18 12.03,562.08 15.11,561.72" fill="#636363"/><circle cx="11.299999999999999" cy="561.4" r="0.65" fill="#636363"/><path d="M10.899999999999999,564.4 H12.799999999999999" stroke="#636363" stroke-width="1.1"/><polygon points="16.40,648.90 17.69,651.72 20.77,652.08 18.49,654.18 19.10,657.22 16.40,655.70 13.70,657.22 14.31,654.18 12.03,652.08 15.11,651.72" fill="#636363"/><circle cx="11.299999999999999" cy="651.4" r="0.65" fill="#636363"/><path d="M10.899999999999999,654.4 H12.799999999999999" stroke="#636363" stroke-width="1.1"/><defs><clipPath id="c1"><rect x="36" y="181" width="93" height="70"/></clipPath></defs><g clip-path="url(#c1)"><g transform="translate(36,181) scale(0.14486) translate(-293,-171)">
<polygon points="287.9,480.1 600,480.1 600,485.9 293.3,485.9" fill="#055078"/>
<polygon points="287.9,480.1 293.3,485.9 293.3,499.4 287.9,493.6" fill="#2D698C"/>
<rect x="293.3" y="485.9" width="306.7" height="13.5" fill="#0872A8"/>
<polygon points="625,480.1 934.3,480.1 940.8,485.9 625,485.9" fill="#A8000F"/>
<rect x="625" y="485.9" width="315.8" height="13.3" fill="#F5001E"/>
<polygon points="601.5,456.8 615.5,456.8 590.5,499.5 588.7,499.5 581.6,491.8" fill="#555555"/>
<polygon points="614.2,456.8 639.3,499.5 588.7,499.5" fill="#CCCCCC"/>
<polygon points="455.8,421 749.3,421 757.7,428.8 463.8,428.8" fill="#E5E5E5"/>
<polygon points="455.8,421 463.8,428.8 463.8,456.8 455.8,449" fill="#7F7F7F"/>
<rect x="463.8" y="428.8" width="293.9" height="28" fill="#CCCCCC"/>
<!-- blue bowl -->
<path d="M423.1,373.1 L543.1,373.1 A60,35 0 0 1 423.1,373.1 Z" fill="#2D698C"/>
<polygon points="469.5,410 474.7,410 474.7,428.8 469.5,423.5" fill="#2D698C"/>
<rect x="474.7" y="405" width="20.1" height="23.8" fill="#0872A8"/>
<polygon points="423.1,373.1 543.6,373.1 548.8,378.8 428.8,378.8" fill="#055078"/>
<path d="M428.8,378.8 L548.8,378.8 A60,35 0 0 1 428.8,378.8 Z" fill="#0872A8"/>
<!-- red bowl -->
<path d="M673.1,373.1 L794.3,373.1 A60.6,35.2 0 0 1 673.1,373.1 Z" fill="#BE4B5A"/>
<polygon points="723.2,410 728.8,410 728.8,428.8 723.2,423.2" fill="#BF4455"/>
<rect x="728.8" y="405" width="19.2" height="23.8" fill="#FF3F55"/>
<polygon points="673.1,373.1 794.1,373.1 799.9,378.7 678.7,378.7" fill="#B82A3A"/>
<path d="M678.7,378.7 L799.9,378.7 A60.6,35.2 0 0 1 678.7,378.7 Z" fill="#FF3F55"/>
<!-- thumbs up -->
<g fill="none" stroke="#7F7F7F" stroke-linejoin="miter" stroke-miterlimit="3" stroke-linecap="round">
<rect x="434" y="290.3" width="26.3" height="70.7" rx="7" fill="#7F7F7F" stroke="none"/><rect x="440.7" y="296.9" width="15.3" height="57.4" rx="2" fill="#FFFFFF" stroke="none"/>
<circle cx="448.9" cy="346.4" r="3.7" stroke-width="2.5"/>
<path stroke-width="6" d="M459.5,296 C467,294 476,288 478.7,278 C480,272 478,266 481,263.5 C484,260.5 490,261.5 493,266 C497,271 499.5,282 496,293.8 L524,294 Q532.5,294 532.5,302.5 Q532.5,311 524,311 Q531,311 531,318.7 Q531,326.5 523,326.5 Q528,326.5 528,334.7 Q528,343 520,343 Q523,343 522,349.5 Q520,357.2 510,357.2 C495,357.5 478,354 459,348"/>
<path stroke-width="4.2" d="M516.5,311 L524,311 M513,326.5 L523,326.5 M510.5,343 L520,343"/>
</g>

<!-- thumbs down -->
<g fill="none" stroke="#7F7F7F" stroke-linejoin="miter" stroke-miterlimit="3" stroke-linecap="round">
<rect x="690.3" y="270" width="24.7" height="67.5" rx="7" fill="#7F7F7F" stroke="none"/><rect x="696.7" y="276.3" width="14.6" height="55" rx="2" fill="#FFFFFF" stroke="none"/>
<circle cx="704.2" cy="283.8" r="3.5" stroke-width="2.5"/>
<path stroke-width="6" d="M714.5,278.5 C722,276.5 732,273.3 745,273.3 L767,273.3 Q773.7,273.3 773.7,280 Q773.7,286 766,286 Q779.5,286 779.5,294 Q779.5,302.2 769,302.2 Q782.8,302.2 782.8,310 Q782.8,318 772,318 Q784,318 784,325.5 Q784,333.8 775,333.8 L747.5,334.6 C751.5,339 752.2,346 750.7,352 C749.2,358.5 745.5,364.4 741,364.7 C737,365 733.5,362 733.3,357 C733,350 731,343 725,338 C721,335 717,333 714,332"/>
<path stroke-width="4.2" d="M763,286 L768,286 M766,302.2 L771,302.2 M769,318 L774,318"/>
</g>

<rect x="450.4" y="509.1" width="328.2" height="41.5" rx="20.7" fill="#D9D9D9" stroke="#BFBFBF" stroke-width="2"/><rect x="449.8" y="553" width="326.8" height="4.5" fill="#7A7A7A"/><rect x="288" y="475" width="312" height="25" fill="#0872A8"/><rect x="625" y="475" width="316" height="25" fill="#F5001E"/><polygon points="601.5,456.8 613.4,456.8 588.7,500 578,500" fill="#444"/><polygon points="614.2,456.8 639.3,500 588.7,500" fill="#CCCCCC"/><text x="614" y="541" text-anchor="middle" font-family="Liberation Sans" font-weight="bold" font-size="27" fill="#595959" textLength="230" lengthAdjust="spacingAndGlyphs">COMPARE IT TITLE</text><text x="614" y="572" text-anchor="middle" font-family="Liberation Sans" font-weight="bold" font-size="20" fill="#3A3A3A" textLength="186" lengthAdjust="spacingAndGlyphs">HERE IS A GOOD SUBTITLE</text></g></g><rect x="36" y="223" width="1.2" height="8" rx="0" fill="#FFFFFF"/><rect x="127.9" y="223" width="1.2" height="8" rx="0" fill="#FFFFFF"/><rect x="70.3" y="278.9" width="19.7" height="60.3" rx="0" fill="#F0F0F0"/><text x="80.3" y="286.3" text-anchor="middle" font-family="Liberation Sans" font-weight="bold" font-size="5.5" fill="#F26522">VS</text><rect x="55.5" y="279.4" width="11" height="1.3" rx="0" fill="#444444"/><rect x="94" y="279.4" width="12" height="1.3" rx="0" fill="#666666"/><rect x="46.5" y="283.2" width="20" height="0.8" rx="0" fill="#B8B8B8"/><rect x="94" y="283.2" width="18" height="0.8" rx="0" fill="#C8C8C8"/><rect x="46.5" y="285.2" width="20" height="0.8" rx="0" fill="#B8B8B8"/><rect x="94" y="285.2" width="18" height="0.8" rx="0" fill="#C8C8C8"/><rect x="46.5" y="287.2" width="20" height="0.8" rx="0" fill="#B8B8B8"/><rect x="94" y="287.2" width="18" height="0.8" rx="0" fill="#C8C8C8"/><rect x="73" y="290" width="14" height="0.8" rx="0" fill="#BDBDBD"/><rect x="75" y="292" width="10" height="0.8" rx="0" fill="#BDBDBD"/><rect x="73" y="297.2" width="14" height="0.8" rx="0" fill="#BDBDBD"/><rect x="75" y="299.2" width="10" height="0.8" rx="0" fill="#BDBDBD"/><rect x="73" y="304.2" width="14" height="0.8" rx="0" fill="#BDBDBD"/><rect x="75" y="306.2" width="10" height="0.8" rx="0" fill="#BDBDBD"/><rect x="73" y="311.1" width="14" height="0.8" rx="0" fill="#BDBDBD"/><rect x="75" y="313.1" width="10" height="0.8" rx="0" fill="#BDBDBD"/><rect x="73" y="318.9" width="14" height="0.8" rx="0" fill="#BDBDBD"/><rect x="75" y="320.9" width="10" height="0.8" rx="0" fill="#BDBDBD"/><rect x="73" y="326.2" width="14" height="0.8" rx="0" fill="#BDBDBD"/><rect x="75" y="328.2" width="10" height="0.8" rx="0" fill="#BDBDBD"/><rect x="39" y="290" width="29.799999999999997" height="2.8" rx="0" fill="#9BBB30"/><rect x="40.5" y="291" width="2.5" height="0.8" rx="0" fill="#FFFFFF"/><rect x="46.2" y="297.2" width="22.599999999999994" height="2.8" rx="0" fill="#F5334F"/><rect x="47.7" y="298.2" width="2.5" height="0.8" rx="0" fill="#FFFFFF"/><rect x="48.3" y="304.2" width="20.5" height="2.8" rx="0" fill="#F5334F"/><rect x="49.8" y="305.2" width="2.5" height="0.8" rx="0" fill="#FFFFFF"/><rect x="40.7" y="311.1" width="28.099999999999994" height="2.8" rx="0" fill="#9BBB30"/><rect x="42.2" y="312.1" width="2.5" height="0.8" rx="0" fill="#FFFFFF"/><rect x="42.2" y="318.9" width="26.599999999999994" height="2.8" rx="0" fill="#9BBB30"/><rect x="43.7" y="319.9" width="2.5" height="0.8" rx="0" fill="#FFFFFF"/><rect x="41.2" y="326.2" width="27.599999999999994" height="2.8" rx="0" fill="#F5334F"/><rect x="42.7" y="327.2" width="2.5" height="0.8" rx="0" fill="#FFFFFF"/><rect x="92.3" y="290" width="24.400000000000006" height="2.8" rx="0" fill="#F5334F"/><rect x="112.7" y="291" width="2.5" height="0.8" rx="0" fill="#FFFFFF"/><rect x="92.3" y="297.2" width="30.400000000000006" height="2.8" rx="0" fill="#9BBB30"/><rect x="118.7" y="298.2" width="2.5" height="0.8" rx="0" fill="#FFFFFF"/><rect x="92.3" y="304.2" width="30.400000000000006" height="2.8" rx="0" fill="#9BBB30"/><rect x="118.7" y="305.2" width="2.5" height="0.8" rx="0" fill="#FFFFFF"/><rect x="92.3" y="311.1" width="25.5" height="2.8" rx="0" fill="#F5334F"/><rect x="113.8" y="312.1" width="2.5" height="0.8" rx="0" fill="#FFFFFF"/><rect x="92.3" y="318.9" width="9.5" height="2.8" rx="0" fill="#F5334F"/><rect x="97.8" y="319.9" width="2.5" height="0.8" rx="0" fill="#FFFFFF"/><path d="M112.6,325.6 L110.6,312.6 L122.6,325.6 Z" fill="#7DC8F0" stroke="#111" stroke-width="0.8"/><rect x="92.9" y="325.6" width="34.8" height="12.8" fill="#7DC8F0" stroke="#111" stroke-width="0.8"/><path d="M113.3,325.6 H121.8" stroke="#7DC8F0" stroke-width="1.2"/><rect x="94.5" y="328" width="31" height="0.7" rx="0" fill="#2B5F80"/><rect x="94.5" y="330.5" width="31" height="0.7" rx="0" fill="#2B5F80"/><rect x="94.5" y="333" width="31" height="0.7" rx="0" fill="#2B5F80"/><rect x="94.5" y="335.5" width="31" height="0.7" rx="0" fill="#2B5F80"/><rect x="45" y="384" width="25.5" height="3" rx="1.5" fill="#7DD3F5"/><rect x="39.3" y="391" width="31.200000000000003" height="3" rx="1.5" fill="#7DD3F5"/><rect x="49.5" y="397.6" width="21.0" height="3" rx="1.5" fill="#7DD3F5"/><rect x="43" y="404.6" width="27.5" height="3" rx="1.5" fill="#7DD3F5"/><rect x="43" y="412" width="27.5" height="6" rx="3.0" fill="#7DD3F5"/><rect x="92" y="384" width="30.700000000000003" height="3" rx="1.5" fill="#F26522"/><rect x="92" y="391" width="34" height="3" rx="1.5" fill="#F26522"/><rect x="92" y="397.6" width="25" height="3" rx="1.5" fill="#F26522"/><rect x="92" y="404.6" width="29" height="3" rx="1.5" fill="#F26522"/><rect x="92" y="412" width="32" height="6" rx="3.0" fill="#F26522"/><rect x="76" y="385" width="9" height="1.2" rx="0" fill="#555"/><rect x="76" y="392" width="9" height="1.2" rx="0" fill="#555"/><rect x="76" y="398.5" width="9" height="1.2" rx="0" fill="#555"/><rect x="76" y="405.5" width="9" height="1.2" rx="0" fill="#555"/><rect x="76" y="413" width="9" height="1.2" rx="0" fill="#555"/><rect x="40" y="370.5" width="14" height="1" rx="0" fill="#666"/><rect x="38" y="373" width="16" height="0.8" rx="0" fill="#999"/><rect x="40" y="375" width="13" height="0.8" rx="0" fill="#BBB"/><rect x="104.5" y="370.5" width="10" height="1" rx="0" fill="#666"/><rect x="104" y="373" width="16" height="0.8" rx="0" fill="#999"/><rect x="104" y="375" width="12" height="0.8" rx="0" fill="#BBB"/><circle cx="66" cy="372" r="2.6" fill="#F3D5C0"/><path d="M63,371.5 Q64,368 67,368.6 Q69.5,369.6 68.5,371.5 Q66,370 63,371.5 Z" fill="#6B2A22"/><circle cx="97" cy="372" r="2.4" fill="#F3D5C0"/><path d="M94.7,371 Q96.8,368 99.3,371 Z" fill="#6B2A22"/><rect x="94" y="375" width="6" height="3" fill="#D9363E"/><path d="M69,378.4 L66.5,373 L76,378.4 Z" fill="#111"/><rect x="69.7" y="378.4" width="35" height="11.2" fill="#7DC8F0" stroke="#111" stroke-width="0.8"/><rect x="72" y="380.8" width="30" height="0.7" rx="0" fill="#2B5F80"/><rect x="72" y="383.3" width="30" height="0.7" rx="0" fill="#2B5F80"/><rect x="72" y="385.8" width="30" height="0.7" rx="0" fill="#2B5F80"/><path d="M104,416.6 L114,414 L110,416.6 Z" fill="#111"/><rect x="78.3" y="416.6" width="36" height="11.8" fill="#7DC8F0" stroke="#111" stroke-width="0.8"/><rect x="80.5" y="419" width="31" height="0.7" rx="0" fill="#2B5F80"/><rect x="80.5" y="421.5" width="31" height="0.7" rx="0" fill="#2B5F80"/><rect x="80.5" y="424" width="31" height="0.7" rx="0" fill="#2B5F80"/><rect x="80.5" y="426.3" width="31" height="0.7" rx="0" fill="#2B5F80"/><rect x="57" y="457" width="51" height="1.6" rx="0" fill="#7A7A7A"/><rect x="54" y="462" width="57" height="0.8" rx="0" fill="#BDBDBD"/><rect x="71" y="464" width="24" height="0.8" rx="0" fill="#BDBDBD"/><defs><clipPath id="c4"><circle cx="82.7" cy="493.1" r="22"/></clipPath></defs><g clip-path="url(#c4)"><rect x="60" y="470" width="46" height="46" fill="#82D4F5"/><path d="M60,470 H106 L100,475.8 L65,510.4 L60,515 Z" fill="#FF3F55"/></g><rect x="63.5" y="484" width="8" height="6" fill="none" stroke="#FFF" stroke-width="0.9"/><rect x="92" y="488" width="8" height="5" fill="none" stroke="#FFF" stroke-width="0.9"/><rect x="67" y="480" width="5" height="0.8" rx="0" fill="#FFFFFF"/><rect x="78" y="480" width="4" height="0.8" rx="0" fill="#FFFFFF"/><rect x="86" y="480" width="5" height="0.8" rx="0" fill="#FFFFFF"/><rect x="90" y="497" width="10" height="0.8" rx="0" fill="#FFFFFF"/><rect x="76" y="504" width="5" height="0.8" rx="0" fill="#FFFFFF"/><rect x="86" y="504" width="4" height="0.8" rx="0" fill="#FFFFFF"/><rect x="96" y="504" width="4" height="0.8" rx="0" fill="#FFFFFF"/><rect x="63" y="494" width="8" height="0.8" rx="0" fill="#FFFFFF"/><rect x="47" y="488" width="8" height="1.2" rx="0" fill="#555"/><rect x="42" y="492" width="13" height="0.7" rx="0" fill="#AAA"/><rect x="42" y="494" width="13" height="0.7" rx="0" fill="#AAA"/><rect x="44" y="496" width="11" height="0.7" rx="0" fill="#AAA"/><rect x="107" y="488" width="8" height="1.2" rx="0" fill="#555"/><rect x="106" y="492" width="13" height="0.7" rx="0" fill="#AAA"/><rect x="106" y="494" width="13" height="0.7" rx="0" fill="#AAA"/><rect x="106" y="496" width="11" height="0.7" rx="0" fill="#AAA"/><rect x="62.5" y="547.6" width="41" height="1.6" rx="0" fill="#7A7A7A"/><rect x="41.5" y="557.2" width="19.5" height="2.8" rx="1.4" fill="#DADADA"/><rect x="47.5" y="558.1" width="6" height="1" rx="0" fill="#666"/><rect x="41.5" y="579.3" width="19.5" height="2.8" rx="1.4" fill="#DADADA"/><rect x="47.5" y="580.1999999999999" width="6" height="1" rx="0" fill="#666"/><rect x="104.5" y="557.2" width="19.5" height="2.8" rx="1.4" fill="#DADADA"/><rect x="110.5" y="558.1" width="6" height="1" rx="0" fill="#666"/><rect x="104.5" y="579.4" width="19.5" height="2.8" rx="1.4" fill="#DADADA"/><rect x="110.5" y="580.3" width="6" height="1" rx="0" fill="#666"/><rect x="43" y="563.5" width="1.8" height="1.8" rx="0" fill="#B5CC5A"/><rect x="46" y="563.5" width="10" height="0.8" rx="0" fill="#777"/><rect x="46" y="565.1" width="12" height="0.6" rx="0" fill="#BBB"/><rect x="106" y="563.5" width="1.8" height="1.8" rx="0" fill="#B5CC5A"/><rect x="109" y="563.5" width="10" height="0.8" rx="0" fill="#777"/><rect x="109" y="565.1" width="12" height="0.6" rx="0" fill="#BBB"/><rect x="43" y="567.5" width="1.8" height="1.8" rx="0" fill="#B5CC5A"/><rect x="46" y="567.5" width="10" height="0.8" rx="0" fill="#777"/><rect x="46" y="569.1" width="12" height="0.6" rx="0" fill="#BBB"/><rect x="106" y="567.5" width="1.8" height="1.8" rx="0" fill="#B5CC5A"/><rect x="109" y="567.5" width="10" height="0.8" rx="0" fill="#777"/><rect x="109" y="569.1" width="12" height="0.6" rx="0" fill="#BBB"/><rect x="43" y="571.5" width="1.8" height="1.8" rx="0" fill="#B5CC5A"/><rect x="46" y="571.5" width="10" height="0.8" rx="0" fill="#777"/><rect x="46" y="573.1" width="12" height="0.6" rx="0" fill="#BBB"/><rect x="106" y="571.5" width="1.8" height="1.8" rx="0" fill="#B5CC5A"/><rect x="109" y="571.5" width="10" height="0.8" rx="0" fill="#777"/><rect x="109" y="573.1" width="12" height="0.6" rx="0" fill="#BBB"/><rect x="43" y="585.5" width="1.8" height="1.8" rx="0" fill="#F25A6E"/><rect x="46" y="585.5" width="10" height="0.8" rx="0" fill="#777"/><rect x="46" y="587.1" width="12" height="0.6" rx="0" fill="#BBB"/><rect x="106" y="585.5" width="1.8" height="1.8" rx="0" fill="#F25A6E"/><rect x="109" y="585.5" width="10" height="0.8" rx="0" fill="#777"/><rect x="109" y="587.1" width="12" height="0.6" rx="0" fill="#BBB"/><rect x="43" y="589.5" width="1.8" height="1.8" rx="0" fill="#F25A6E"/><rect x="46" y="589.5" width="10" height="0.8" rx="0" fill="#777"/><rect x="46" y="591.1" width="12" height="0.6" rx="0" fill="#BBB"/><rect x="106" y="589.5" width="1.8" height="1.8" rx="0" fill="#F25A6E"/><rect x="109" y="589.5" width="10" height="0.8" rx="0" fill="#777"/><rect x="109" y="591.1" width="12" height="0.6" rx="0" fill="#BBB"/><rect x="43" y="593.5" width="1.8" height="1.8" rx="0" fill="#F25A6E"/><rect x="46" y="593.5" width="10" height="0.8" rx="0" fill="#777"/><rect x="46" y="595.1" width="12" height="0.6" rx="0" fill="#BBB"/><rect x="106" y="593.5" width="1.8" height="1.8" rx="0" fill="#F25A6E"/><rect x="109" y="593.5" width="10" height="0.8" rx="0" fill="#777"/><rect x="109" y="595.1" width="12" height="0.6" rx="0" fill="#BBB"/><rect x="63" y="564" width="11.8" height="24.5" rx="1" fill="#1A1A1A"/><rect x="64" y="566.5" width="9.8" height="19.5" rx="0" fill="#8C8C8C"/><rect x="89.7" y="564" width="11.8" height="24.5" rx="1" fill="#1A1A1A"/><rect x="90.7" y="566.5" width="9.8" height="19.5" rx="0" fill="#8C8C8C"/><circle cx="69" cy="575" r="2.8" fill="#F3D5C0"/><path d="M66,574 Q69,570 72,574 Z" fill="#8B2A22"/><path d="M67,577 Q69,579 71,577 L70.5,578.2 H67.5 Z" fill="#8B2A22"/><rect x="65" y="580.5" width="8" height="5.5" fill="#2F3A44"/><circle cx="95.6" cy="576" r="2.6" fill="#F3D5C0"/><path d="M92.8,575 Q95.6,570.5 98.6,575 Q98,571 95.6,571.5 Z" fill="#5A2A1A"/><rect x="92" y="580" width="7.5" height="6" fill="#F4F4F4"/><rect x="78" y="569" width="7" height="2.5" rx="0" fill="#CCCCCC"/><rect x="78" y="574" width="7" height="1.6" rx="0" fill="#DDDDDD"/><rect x="79" y="577" width="5" height="0.7" rx="0" fill="#CCCCCC"/><rect x="63" y="637.6" width="38" height="1.8" rx="0" fill="#7A7A7A"/><rect x="62" y="641.6" width="42" height="0.9" rx="0" fill="#333333"/><rect x="69" y="643.6" width="26" height="0.7" rx="0" fill="#BBBBBB"/><path d="M41.7,657.5 L51.8,647.9 L62,657.5 H57 V680 H46.5 V657.5 Z" fill="#F26522"/><rect x="49" y="656" width="6" height="0.7" rx="0" fill="#FFF"/><rect x="50" y="660" width="4" height="0.6" rx="0" fill="#FFF"/><rect x="50" y="662.5" width="4" height="0.6" rx="0" fill="#FFF"/><rect x="67.7" y="648" width="29.3" height="20" rx="0" fill="#F0F0F0"/><path d="M77,668 Q77,661.5 82.3,661.5 Q87.6,661.5 87.6,668 Z" fill="#2F3A44"/><path d="M81.6,661.5 L83,661.5 L82.8,666 L81.8,666 Z" fill="#3CB5B5"/><ellipse cx="82.3" cy="656.6" rx="3.2" ry="4.2" fill="#F3D5C0"/><path d="M78.9,656 Q78.5,651.4 82.3,651.4 Q86.1,651.4 85.7,656 Q84,653.8 82.3,654 Q80.6,653.8 78.9,656 Z" fill="#8B2A22"/><path d="M79.1,657.5 Q79.5,661.3 82.3,661.3 Q85.1,661.3 85.5,657.5 Q84,659.6 82.3,659.3 Q80.6,659.6 79.1,657.5 Z" fill="#8B2A22"/><rect x="101" y="650.5" width="20" height="1.6" rx="0" fill="#555"/><rect x="101" y="654.5" width="20" height="0.6" rx="0" fill="#BBBBBB"/><rect x="101" y="657" width="20" height="0.6" rx="0" fill="#BBBBBB"/><rect x="101" y="659.5" width="20" height="0.6" rx="0" fill="#BBBBBB"/><rect x="101" y="662" width="20" height="0.6" rx="0" fill="#BBBBBB"/></svg>
</div>
<span class="t" style="left:14.00px;top:178.30px;font-size:15px;line-height:15px;color:#D24726;letter-spacing:0.000px;">1</span>
<span class="t" style="left:13.40px;top:268.30px;font-size:15px;line-height:15px;color:#444444;letter-spacing:0.000px;">2</span>
<span class="t" style="left:13.40px;top:358.30px;font-size:15px;line-height:15px;color:#444444;letter-spacing:0.000px;">3</span>
<span class="t" style="left:13.40px;top:448.30px;font-size:15px;line-height:15px;color:#444444;letter-spacing:0.000px;">4</span>
<span class="t" style="left:13.40px;top:538.30px;font-size:15px;line-height:15px;color:#444444;letter-spacing:0.000px;">5</span>
<span class="t" style="left:13.40px;top:628.30px;font-size:15px;line-height:15px;color:#444444;letter-spacing:0.000px;">6</span>
</body></html>
